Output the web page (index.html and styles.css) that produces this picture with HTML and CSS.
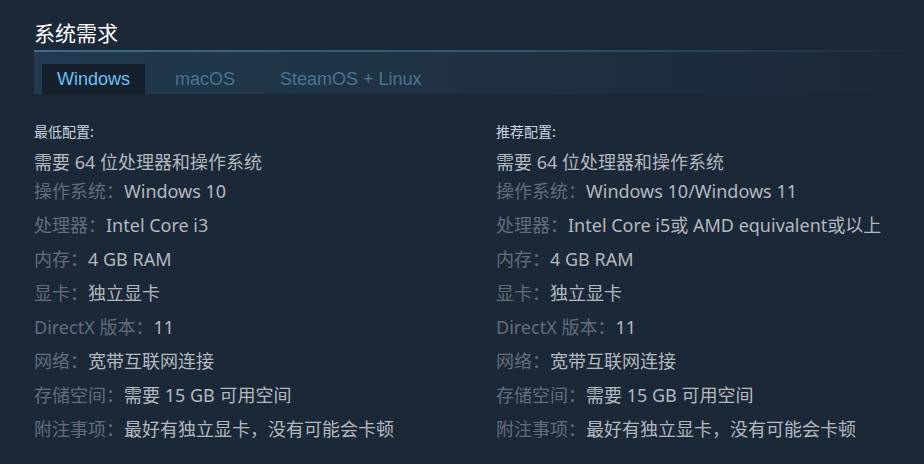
FILE: index.html
```html
<!DOCTYPE html>
<html lang="zh">

<head>
    <meta charset="UTF-8">
    <title>系统需求</title>
    <link rel="stylesheet" href="styles.css">
</head>

<body>
    <div class="sysreq">
        <h2 class="sysreq-title">系统需求</h2>
        <div class="sysreq-tabs">
            <div class="sysreq-tab active">Windows</div>
            <div class="sysreq-tab">macOS</div>
            <div class="sysreq-tab">SteamOS + Linux</div>
        </div>
        <div class="sysreq-contents">
            <div class="sysreq-col">
                <div class="sysreq-head">最低配置:</div>
                <ul class="sysreq-list">
                    <li class="first">需要 64 位处理器和操作系统</li>
                    <li><span class="label">操作系统：</span>Windows 10</li>
                    <li><span class="label">处理器：</span>Intel Core i3</li>
                    <li><span class="label">内存：</span>4 GB RAM</li>
                    <li><span class="label">显卡：</span>独立显卡</li>
                    <li><span class="label">DirectX 版本：</span>11</li>
                    <li><span class="label">网络：</span>宽带互联网连接</li>
                    <li><span class="label">存储空间：</span>需要 15 GB 可用空间</li>
                    <li><span class="label">附注事项：</span>最好有独立显卡，没有可能会卡顿</li>
                </ul>
            </div>
            <div class="sysreq-col">
                <div class="sysreq-head">推荐配置:</div>
                <ul class="sysreq-list">
                    <li class="first">需要 64 位处理器和操作系统</li>
                    <li><span class="label">操作系统：</span>Windows 10/Windows 11</li>
                    <li><span class="label">处理器：</span>Intel Core i5或 AMD equivalent或以上</li>
                    <li><span class="label">内存：</span>4 GB RAM</li>
                    <li><span class="label">显卡：</span>独立显卡</li>
                    <li><span class="label">DirectX 版本：</span>11</li>
                    <li><span class="label">网络：</span>宽带互联网连接</li>
                    <li><span class="label">存储空间：</span>需要 15 GB 可用空间</li>
                    <li><span class="label">附注事项：</span>最好有独立显卡，没有可能会卡顿</li>
                </ul>
            </div>
        </div>
    </div>
</body>

</html>
```

FILE: styles.css
```css
html,
body {
    margin: 0;
    background: #1b2838;
    font-family: "Noto Sans", "Noto Sans CJK SC", sans-serif;
}

.sysreq {
    padding: 19px 0 0 34px;
}

.sysreq-title {
    margin: 0;
    font-size: 21px;
    line-height: 26px;
    font-weight: normal;
    color: #ffffff;
    font-family: "Noto Sans CJK SC", sans-serif;
    padding-bottom: 5px;
}

.sysreq-tabs {
    display: flex;
    padding: 12px 0 0 8px;
    border-top: 2px solid;
    border-image: linear-gradient(to right, #3d6c8a 0%, #2f5068 60%, rgba(40, 70, 90, 0) 100%) 1;
    background: linear-gradient(to right, #213a4f 0%, #1f2f40 60%, #1b2838 100%);
}

.sysreq-tab {
    padding: 0 15px;
    margin-right: 15px;
    height: 30px;
    line-height: 30px;
    font-family: "Liberation Sans", Arial, sans-serif;
    font-size: 18px;
    color: #4a7391;
}

.sysreq-tab.active {
    background: #16202d;
    color: #67c1f5;
}

.sysreq-contents {
    display: grid;
    grid-template-columns: 462px 1fr;
    padding-top: 27px;
}

.sysreq-head {
    font-family: "Noto Sans CJK SC", sans-serif;
    font-size: 14px;
    line-height: 20px;
    color: #c6d4df;
    margin-bottom: 9px;
}

.sysreq-list {
    list-style: none;
    margin: 0;
    padding: 0;
    font-size: 18px;
    line-height: 34px;
    color: #b3b9bf;
}

.sysreq-list li.first {
    line-height: 24px;
}

.sysreq-list .label {
    color: #626d79;
}
```
